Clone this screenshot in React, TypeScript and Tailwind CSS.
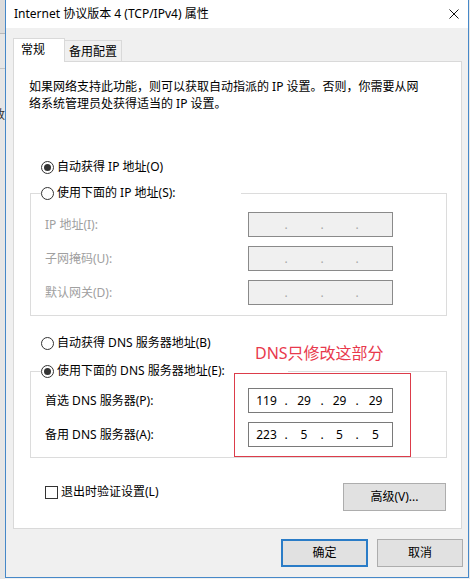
import React from "react";

const F = "font-['Noto_Sans','Noto_Sans_CJK_SC',sans-serif]";

function Radio({ checked, label }: { checked?: boolean; label: string }) {
  return (
    <div className="flex items-center h-[20px]">
      <span className="w-[13px] h-[13px] rounded-full border border-[#333333] bg-white flex items-center justify-center shrink-0">
        {checked && <span className="w-[7px] h-[7px] rounded-full bg-[#333333]" />}
      </span>
      <span className="ml-[3px] text-[12px] leading-[20px] text-black whitespace-nowrap">{label}</span>
    </div>
  );
}

function Dot({ disabled }: { disabled?: boolean }) {
  return (
    <span
      className={
        disabled
          ? "w-[4px] flex justify-center text-[#a8a8a8] text-[12px] leading-[20px]"
          : "w-[4px] flex justify-center text-black text-[12px] leading-[20px]"
      }
    >
      .
    </span>
  );
}

function IpField({ values, disabled }: { values: string[]; disabled?: boolean }) {
  return (
    <div
      className={
        disabled
          ? "w-[145px] h-[25px] border border-[#8a8a8a] bg-[#f0f0f0] flex items-center text-[12px] text-black"
          : "w-[145px] h-[25px] border border-[#7a7a7a] bg-white flex items-center text-[12px] text-black"
      }
    >
      <span className="w-[35px] text-center leading-[20px]">{values[0]}</span>
      <Dot disabled={disabled} />
      <span className="w-[32px] text-center leading-[20px]">{values[1]}</span>
      <Dot disabled={disabled} />
      <span className="w-[31px] text-center leading-[20px]">{values[2]}</span>
      <Dot disabled={disabled} />
      <span className="w-[33px] text-center leading-[20px]">{values[3]}</span>
    </div>
  );
}

function Row({ label, values, disabled }: { label: string; values: string[]; disabled?: boolean }) {
  return (
    <div className="flex items-center h-[25px] pl-[4px]">
      <span
        className={
          disabled
            ? "w-[203px] text-[12px] leading-[20px] text-[#a0a0a0]"
            : "w-[203px] text-[12px] leading-[20px] text-black"
        }
      >
        {label}
      </span>
      <IpField values={values} disabled={disabled} />
    </div>
  );
}

export default function App() {
  return (
    <div className={`relative w-[470px] h-[579px] flex bg-[#f0f0f0] overflow-hidden ${F}`}>
      {/* background window strip */}
      <div className="w-[5px] h-full bg-[#e6e6e6] flex flex-col overflow-hidden">
        <div className="h-[33px] bg-[#dcdcdc]" />
        <div className="h-[1px] bg-[#b8b8b8]" />
        <div className="h-[34px]" />
        <div className="h-[1px] bg-[#c4c4c4]" />
        <div className="h-[36px]" />
        <div className="h-[20px] flex justify-end overflow-hidden">
          <span className="text-[12px] leading-[20px] text-[#333] shrink-0">致</span>
        </div>
      </div>

      {/* dialog window */}
      <div className="w-[464px] h-[578px] flex flex-col border-l border-r border-b border-[#4688c8] bg-[#f0f0f0]">
        {/* title bar */}
        <div className="h-[28px] bg-white flex items-center justify-between pl-[8px] pr-[9px] shrink-0">
          <span className="text-[12px] leading-[16px] text-black">Internet 协议版本 4 (TCP/IPv4) 属性</span>
          <svg width="10" height="10" viewBox="0 0 10 10">
            <path d="M0.5 0.5 L9.5 9.5 M9.5 0.5 L0.5 9.5" stroke="#111" strokeWidth="1" />
          </svg>
        </div>

        {/* body */}
        <div className="flex-1 pl-[7px] pt-[10px] flex flex-col">
          {/* tabs */}
          <div className="flex items-end h-[24px]">
            <div className="relative z-10 w-[52px] h-[24px] bg-white border border-b-0 border-[#d9d9d9] pl-[7px] text-[12px] leading-[22px] text-black">
              常规
            </div>
            <div className="w-[57px] h-[22px] bg-[#f0f0f0] border border-l-0 border-[#d9d9d9] flex justify-center text-[12px] leading-[21px] text-black">
              备用配置
            </div>
          </div>

          {/* panel */}
          <div className="-mt-px w-[449px] h-[468px] bg-white border border-[#d9d9d9] flex flex-col">
            <p className="mt-[16px] pl-[15px] text-[12px] leading-[17px] text-black whitespace-nowrap">
              如果网络支持此功能，则可以获取自动指派的 IP 设置。否则，你需要从网
              <br />
              络系统管理员处获得适当的 IP 设置。
            </p>

            <div className="mt-[45px] ml-[27px]">
              <Radio checked label="自动获得 IP 地址(O)" />
            </div>

            <fieldset className="mt-[6px] ml-[16px] w-[417px] border border-[#dcdcdc] pl-[10px] pt-[9px] pb-[10px] flex flex-col gap-[9px]">
              <legend className="w-[200px]">
                <Radio label="使用下面的 IP 地址(S):" />
              </legend>
              <Row label="IP 地址(I):" values={["", "", "", ""]} disabled />
              <Row label="子网掩码(U):" values={["", "", "", ""]} disabled />
              <Row label="默认网关(D):" values={["", "", "", ""]} disabled />
            </fieldset>

            <div className="mt-[17px] ml-[27px]">
              <Radio label="自动获得 DNS 服务器地址(B)" />
            </div>

            <fieldset className="mt-[8px] ml-[16px] w-[417px] border border-[#dcdcdc] pl-[10px] pt-[7px] pb-[10px] flex flex-col gap-[9px]">
              <legend className="w-[247px]">
                <Radio checked label="使用下面的 DNS 服务器地址(E):" />
              </legend>
              <Row label="首选 DNS 服务器(P):" values={["119", "29", "29", "29"]} />
              <Row label="备用 DNS 服务器(A):" values={["223", "5", "5", "5"]} />
            </fieldset>

            <div className="mt-[25px] ml-[31px] mr-[15px] flex justify-between items-start">
              <div className="flex items-center h-[18px]">
                <span className="w-[13px] h-[13px] border border-[#333333] bg-white" />
                <span className="ml-[3px] text-[12px] leading-[18px] text-black">退出时验证设置(L)</span>
              </div>
              <button className="w-[103px] h-[28px] bg-[#e1e1e1] border border-[#adadad] text-[12px] text-black">
                高级(V)...
              </button>
            </div>
          </div>

          {/* buttons */}
          <div className="mt-[10px] w-[450px] flex justify-end gap-[9px]">
            <button className="w-[87px] h-[28px] bg-[#e1e1e1] border-2 border-[#2a7cc7] text-[12px] text-black">
              确定
            </button>
            <button className="w-[86px] h-[28px] bg-[#e1e1e1] border border-[#adadad] text-[12px] text-black">
              取消
            </button>
          </div>
        </div>
      </div>
      <div className="w-[1px] h-full bg-[#e8e8e8]" />

      {/* annotation overlay */}
      <div className="absolute left-[255px] top-[343px] text-[16px] leading-[20px] text-[#e8394d] whitespace-nowrap">
        DNS只修改这部分
      </div>
      <div className="absolute left-[234px] top-[373px] w-[177px] h-[84px] border border-[#dc3c4a]" />
    </div>
  );
}
